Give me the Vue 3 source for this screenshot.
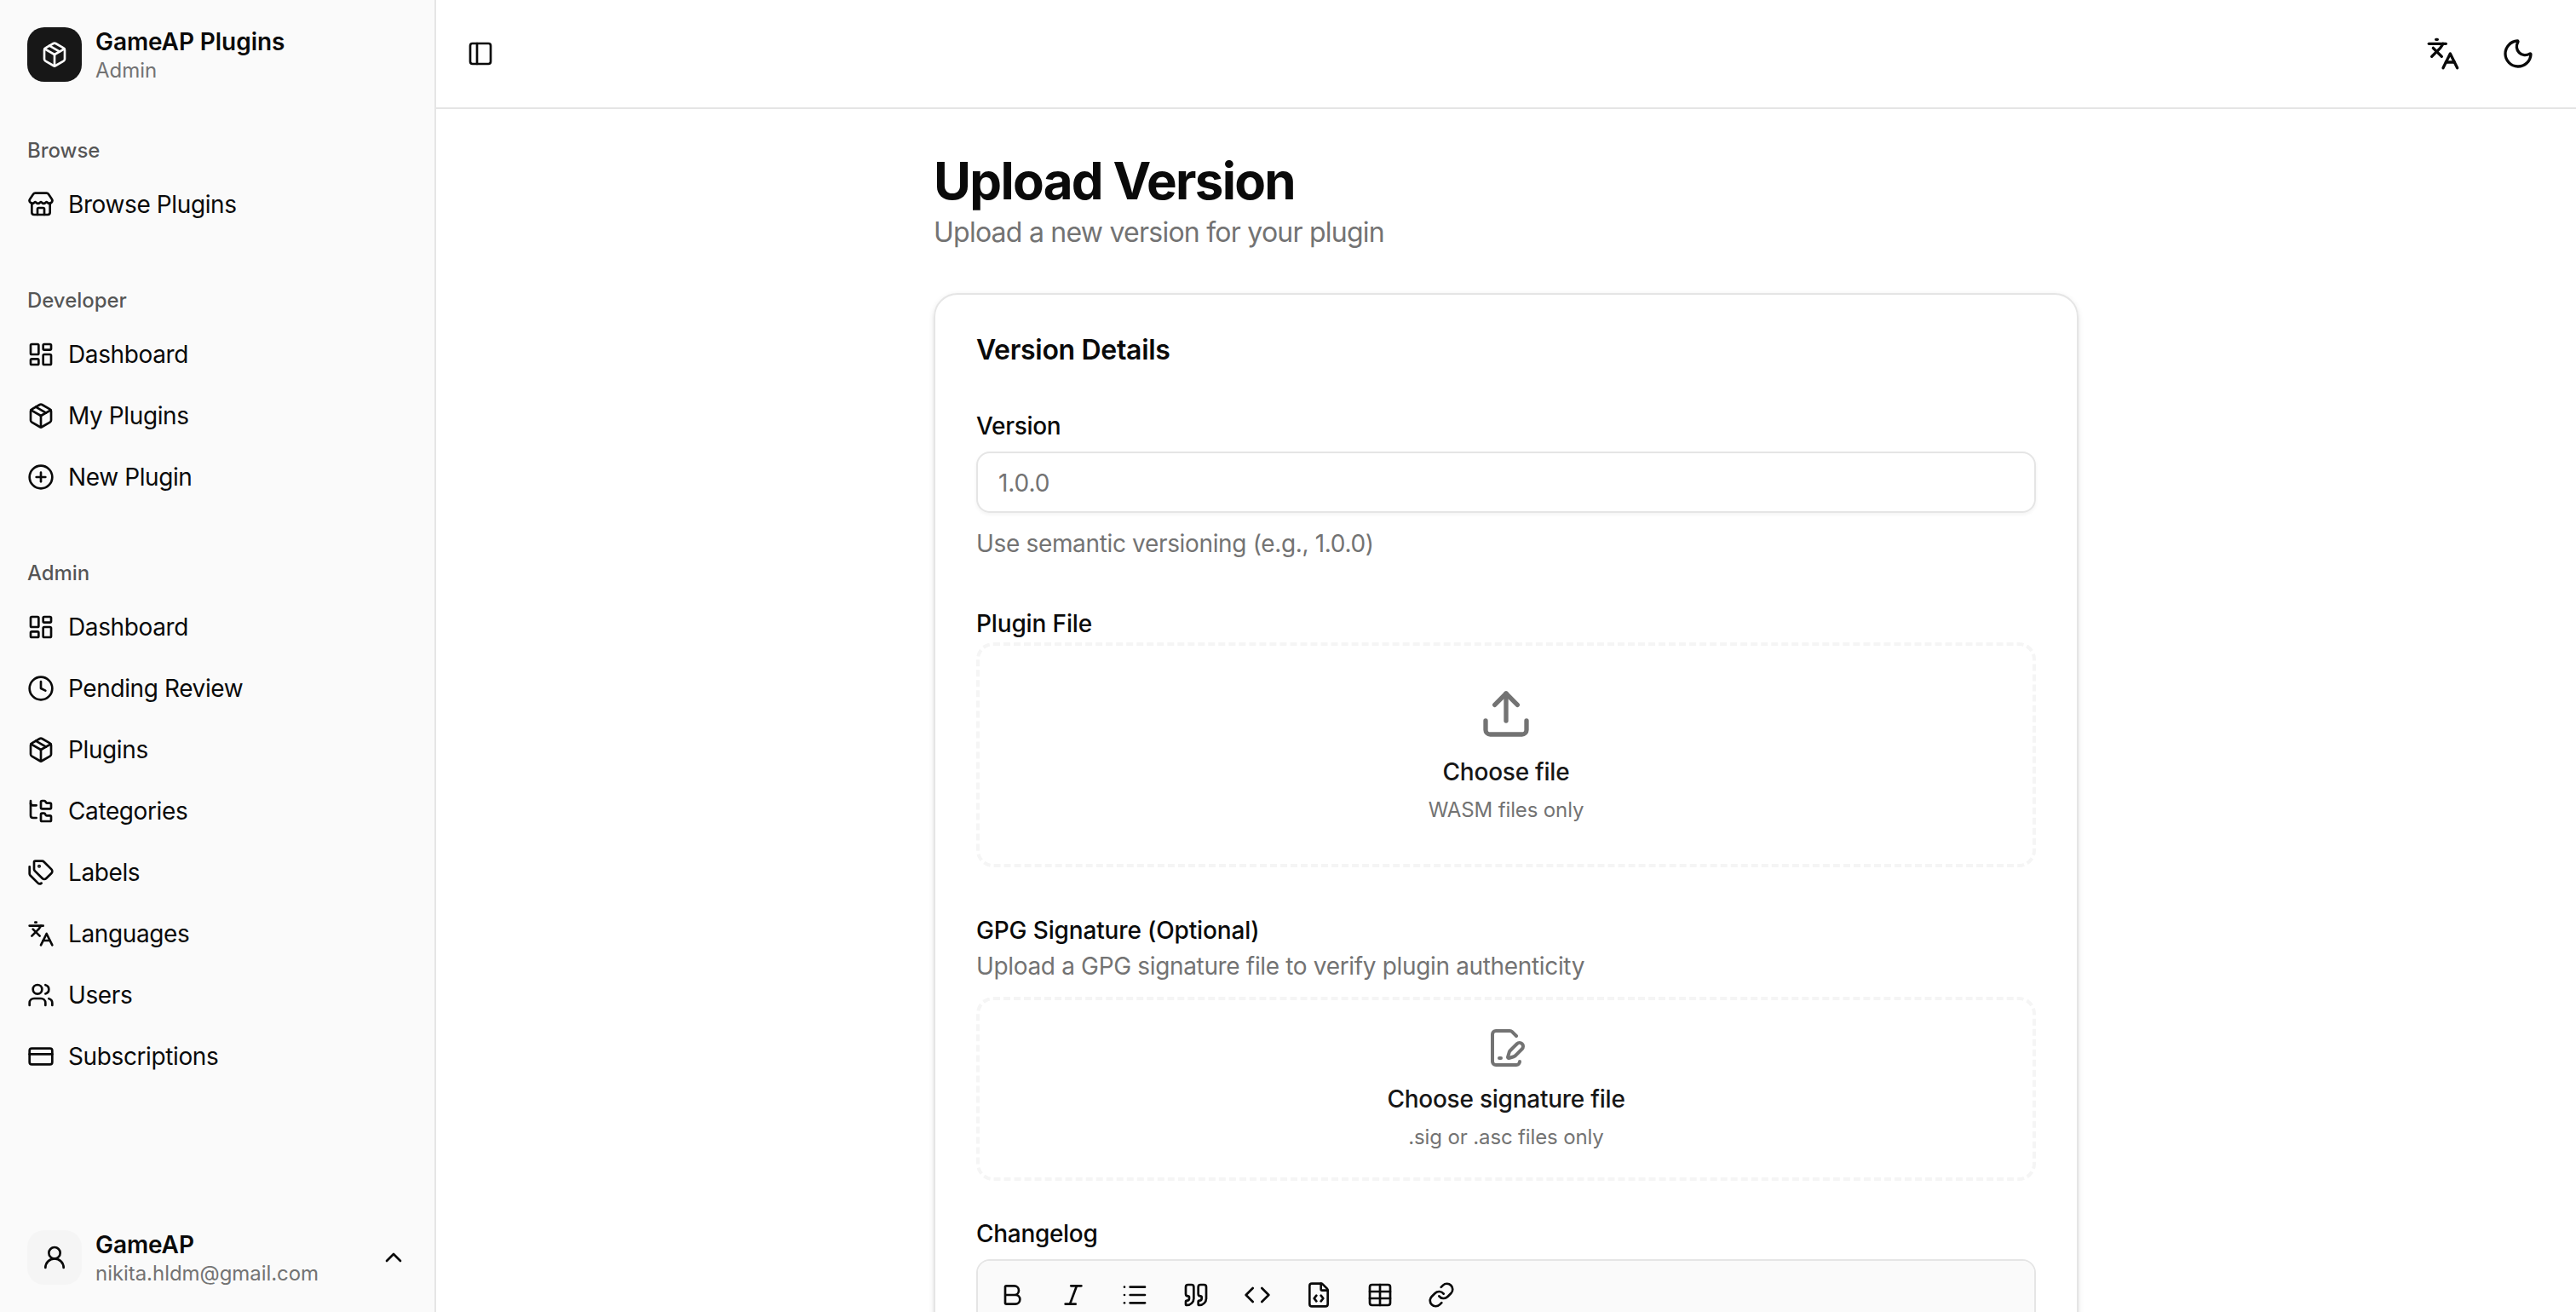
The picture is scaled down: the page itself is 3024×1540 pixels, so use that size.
<template>
  <div class="layout">
    <aside class="sidebar">
      <div class="brand">
        <div class="brand-logo"><Icon name="package" /></div>
        <div class="stack">
          <span class="stack-title">GameAP Plugins</span>
          <span class="stack-sub">Admin</span>
        </div>
      </div>

      <nav class="groups">
        <section v-for="group in groups" :key="group.label" class="group">
          <div class="group-label">{{ group.label }}</div>
          <ul>
            <li v-for="item in group.items" :key="item.title">
              <a class="nav-item">
                <Icon :name="item.icon" />
                <span>{{ item.title }}</span>
              </a>
            </li>
          </ul>
        </section>
      </nav>

      <div class="account">
        <div class="avatar"><Icon name="user" /></div>
        <div class="stack">
          <span class="stack-title">GameAP</span>
          <span class="stack-sub">nikita.hldm@gmail.com</span>
        </div>
        <Icon name="chevronUp" />
      </div>
    </aside>

    <div class="content">
      <header class="topbar">
        <button class="trigger" aria-label="Toggle sidebar"><Icon name="panelLeft" /></button>
        <div class="topbar-actions">
          <button class="icon-btn" aria-label="Language"><Icon name="languages" class="icon-md" /></button>
          <button class="icon-btn" aria-label="Theme"><Icon name="moon" class="icon-md" /></button>
        </div>
      </header>

      <main class="page">
        <div class="page-head">
          <h1>Upload Version</h1>
          <p>Upload a new version for your plugin</p>
        </div>

        <form class="card" @submit.prevent>
          <h2>Version Details</h2>

          <div class="field">
            <label for="version">Version</label>
            <input id="version" v-model="version" type="text" placeholder="1.0.0" />
            <p class="hint">Use semantic versioning (e.g., 1.0.0)</p>
          </div>

          <div class="upload">
            <div class="upload-label"><label>Plugin File</label></div>
            <div class="dropzone">
              <Icon name="upload" class="icon-xl" />
              <span class="drop-title">Choose file</span>
              <span class="drop-note">WASM files only</span>
            </div>
          </div>

          <div class="upload">
            <div class="upload-label"><label>GPG Signature (Optional)</label></div>
            <p class="hint upload-hint">Upload a GPG signature file to verify plugin authenticity</p>
            <div class="dropzone compact">
              <Icon name="filePen" class="icon-lg" />
              <span class="drop-title">Choose signature file</span>
              <span class="drop-note">.sig or .asc files only</span>
            </div>
          </div>

          <div class="field">
            <label>Changelog</label>
            <div class="editor">
              <div class="toolbar">
                <button v-for="tool in tools" :key="tool" type="button" class="tool" :aria-label="tool">
                  <Icon :name="tool" />
                </button>
              </div>
              <div class="editor-body"></div>
            </div>
          </div>
        </form>
      </main>
    </div>
  </div>
</template>

<script setup>
import { h, ref } from 'vue';

const icons = {
  package:
    '<path d="M11 21.73a2 2 0 0 0 2 0l7-4A2 2 0 0 0 21 16V8a2 2 0 0 0-1-1.73l-7-4a2 2 0 0 0-2 0l-7 4A2 2 0 0 0 3 8v8a2 2 0 0 0 1 1.73z"/><path d="M12 22V12"/><path d="M3.29 7 12 12l8.71-5"/><path d="m7.5 4.27 9 5.15"/>',
  store:
    '<path d="M15 21v-5a1 1 0 0 0-1-1h-4a1 1 0 0 0-1 1v5"/><path d="M17.774 10.31a1.12 1.12 0 0 0-1.549 0 2.5 2.5 0 0 1-3.451 0 1.12 1.12 0 0 0-1.548 0 2.5 2.5 0 0 1-3.452 0 1.12 1.12 0 0 0-1.549 0 2.5 2.5 0 0 1-3.77-3.248l2.889-4.184A2 2 0 0 1 7 2h10a2 2 0 0 1 1.653.873l2.895 4.192a2.5 2.5 0 0 1-3.774 3.244"/><path d="M4 10.95V19a2 2 0 0 0 2 2h12a2 2 0 0 0 2-2v-8.05"/>',
  dashboard:
    '<rect width="7" height="9" x="3" y="3" rx="1"/><rect width="7" height="5" x="14" y="3" rx="1"/><rect width="7" height="9" x="14" y="12" rx="1"/><rect width="7" height="5" x="3" y="16" rx="1"/>',
  circlePlus: '<circle cx="12" cy="12" r="10"/><path d="M8 12h8"/><path d="M12 8v8"/>',
  clock: '<circle cx="12" cy="12" r="10"/><path d="M12 6v6l4 2"/>',
  folderTree:
    '<path d="M20 10a1 1 0 0 0 1-1V6a1 1 0 0 0-1-1h-2.5a1 1 0 0 1-.8-.4l-.9-1.2A1 1 0 0 0 15 3h-2a1 1 0 0 0-1 1v5a1 1 0 0 0 1 1Z"/><path d="M20 21a1 1 0 0 0 1-1v-3a1 1 0 0 0-1-1h-2.9a1 1 0 0 1-.88-.55l-.42-.85a1 1 0 0 0-.92-.6H13a1 1 0 0 0-1 1v5a1 1 0 0 0 1 1Z"/><path d="M3 5a2 2 0 0 0 2 2h3"/><path d="M3 3v13a2 2 0 0 0 2 2h3"/>',
  tags:
    '<path d="M13.172 2a2 2 0 0 1 1.414.586l6.71 6.71a2.4 2.4 0 0 1 0 3.408l-4.592 4.592a2.4 2.4 0 0 1-3.408 0l-6.71-6.71A2 2 0 0 1 6 9.172V3a1 1 0 0 1 1-1z"/><path d="M2 7v6.172a2 2 0 0 0 .586 1.414l6.71 6.71a2.4 2.4 0 0 0 3.191.193"/><circle cx="10.5" cy="6.5" r=".5" fill="currentColor"/>',
  languages:
    '<path d="m5 8 6 6"/><path d="m4 14 6-6 2-3"/><path d="M2 5h12"/><path d="M7 2h1"/><path d="m22 22-5-10-5 10"/><path d="M14 18h6"/>',
  users:
    '<path d="M16 21v-2a4 4 0 0 0-4-4H6a4 4 0 0 0-4 4v2"/><path d="M16 3.128a4 4 0 0 1 0 7.744"/><path d="M22 21v-2a4 4 0 0 0-3-3.87"/><circle cx="9" cy="7" r="4"/>',
  creditCard: '<rect width="20" height="14" x="2" y="5" rx="2"/><path d="M2 10h20"/>',
  user: '<circle cx="12" cy="8" r="5"/><path d="M20 21a8 8 0 0 0-16 0"/>',
  chevronUp: '<path d="m18 15-6-6-6 6"/>',
  panelLeft: '<rect width="18" height="18" x="3" y="3" rx="2"/><path d="M9 3v18"/>',
  moon:
    '<path d="M20.985 12.486a9 9 0 1 1-9.473-9.472c.405-.022.617.46.402.803a6 6 0 0 0 8.268 8.268c.344-.215.825-.004.803.401"/>',
  upload: '<path d="M12 3v12"/><path d="m17 8-5-5-5 5"/><path d="M21 15v4a2 2 0 0 1-2 2H5a2 2 0 0 1-2-2v-4"/>',
  filePen:
    '<path d="m18 5-2.414-2.414A2 2 0 0 0 14.172 2H6a2 2 0 0 0-2 2v16a2 2 0 0 0 2 2h12a2 2 0 0 0 2-2"/><path d="M21.378 12.626a1 1 0 0 0-3.004-3.004l-4.01 4.012a2 2 0 0 0-.506.854l-.837 2.87a.5.5 0 0 0 .62.62l2.87-.837a2 2 0 0 0 .854-.506z"/><path d="M8 18h1"/>',
  bold: '<path d="M6 12h9a4 4 0 0 1 0 8H7a1 1 0 0 1-1-1V5a1 1 0 0 1 1-1h7a4 4 0 0 1 0 8"/>',
  italic: '<path d="M19 4h-9"/><path d="M14 20H5"/><path d="M15 4 9 20"/>',
  list:
    '<path d="M3 5h.01"/><path d="M3 12h.01"/><path d="M3 19h.01"/><path d="M8 5h13"/><path d="M8 12h13"/><path d="M8 19h13"/>',
  quote:
    '<path d="M16 3a2 2 0 0 0-2 2v6a2 2 0 0 0 2 2 1 1 0 0 1 1 1v1a2 2 0 0 1-2 2 1 1 0 0 0-1 1v2a1 1 0 0 0 1 1 6 6 0 0 0 6-6V5a2 2 0 0 0-2-2z"/><path d="M5 3a2 2 0 0 0-2 2v6a2 2 0 0 0 2 2 1 1 0 0 1 1 1v1a2 2 0 0 1-2 2 1 1 0 0 0-1 1v2a1 1 0 0 0 1 1 6 6 0 0 0 6-6V5a2 2 0 0 0-2-2z"/>',
  code: '<path d="m16 18 6-6-6-6"/><path d="m8 6-6 6 6 6"/>',
  fileCode:
    '<path d="M6 22a2 2 0 0 1-2-2V4a2 2 0 0 1 2-2h8a2.4 2.4 0 0 1 1.704.706l3.588 3.588A2.4 2.4 0 0 1 20 8v12a2 2 0 0 1-2 2z"/><path d="M14 2v5a1 1 0 0 0 1 1h5"/><path d="M10 12.5 8 15l2 2.5"/><path d="m14 12.5 2 2.5-2 2.5"/>',
  table: '<path d="M12 3v18"/><rect width="18" height="18" x="3" y="3" rx="2"/><path d="M3 9h18"/><path d="M3 15h18"/>',
  link:
    '<path d="M10 13a5 5 0 0 0 7.54.54l3-3a5 5 0 0 0-7.07-7.07l-1.72 1.71"/><path d="M14 11a5 5 0 0 0-7.54-.54l-3 3a5 5 0 0 0 7.07 7.07l1.71-1.71"/>',
};

const Icon = (props) => h('svg', { class: 'icon', viewBox: '0 0 24 24', innerHTML: icons[props.name] });
Icon.props = ['name'];

const groups = [
  {
    label: 'Browse',
    items: [{ title: 'Browse Plugins', icon: 'store' }],
  },
  {
    label: 'Developer',
    items: [
      { title: 'Dashboard', icon: 'dashboard' },
      { title: 'My Plugins', icon: 'package' },
      { title: 'New Plugin', icon: 'circlePlus' },
    ],
  },
  {
    label: 'Admin',
    items: [
      { title: 'Dashboard', icon: 'dashboard' },
      { title: 'Pending Review', icon: 'clock' },
      { title: 'Plugins', icon: 'package' },
      { title: 'Categories', icon: 'folderTree' },
      { title: 'Labels', icon: 'tags' },
      { title: 'Languages', icon: 'languages' },
      { title: 'Users', icon: 'users' },
      { title: 'Subscriptions', icon: 'creditCard' },
    ],
  },
];

const tools = ['bold', 'italic', 'list', 'quote', 'code', 'fileCode', 'table', 'link'];

const version = ref('');
</script>

<style>
body {
  margin: 0;
  background: #fff;
}
</style>

<style scoped>
* {
  box-sizing: border-box;
}

.layout {
  display: flex;
  height: 100vh;
  overflow: hidden;
  color: #0a0a0a;
  font-family: Inter, "Liberation Sans", sans-serif;
  font-size: 32px;
  line-height: 48px;
  font-optical-sizing: none;
  -webkit-font-smoothing: antialiased;
}

h1,
h2,
p,
ul {
  margin: 0;
  padding: 0;
}

ul {
  list-style: none;
}

button {
  display: flex;
  align-items: center;
  justify-content: center;
  padding: 0;
  border: 0;
  background: none;
  color: inherit;
  cursor: pointer;
}

.icon {
  width: 32px;
  height: 32px;
  flex-shrink: 0;
  fill: none;
  stroke: currentColor;
  stroke-width: 2;
  stroke-linecap: round;
  stroke-linejoin: round;
}

.icon-md {
  width: 40px;
  height: 40px;
}

.icon-lg {
  width: 48px;
  height: 48px;
}

.icon-xl {
  width: 64px;
  height: 64px;
}

/* sidebar */
.sidebar {
  display: flex;
  flex-direction: column;
  width: 512px;
  flex-shrink: 0;
  background: #fafafa;
  border-right: 2px solid #e5e5e5;
}

.brand,
.account {
  display: flex;
  align-items: center;
  gap: 16px;
  height: 96px;
  margin: 16px;
  padding: 0 16px;
}

.brand-logo,
.avatar {
  display: flex;
  align-items: center;
  justify-content: center;
  width: 64px;
  height: 64px;
  border-radius: 20px;
}

.brand-logo {
  background: #171717;
  color: #fafafa;
}

.avatar {
  background: #f5f5f5;
}

.stack {
  display: grid;
  flex: 1;
}

.stack-title {
  font-size: 28px;
  line-height: 35px;
  font-weight: 600;
  letter-spacing: -0.07px;
}

.stack-sub {
  padding-top: 1px;
  margin-bottom: -1px;
  font-size: 24px;
  line-height: 30px;
  letter-spacing: -0.05px;
  color: #737373;
}

.groups {
  display: flex;
  flex: 1;
  flex-direction: column;
  gap: 16px;
}

.group {
  padding: 16px;
}

.group-label {
  padding: 1px 16px 0;
  margin-bottom: -1px;
  font-size: 24px;
  line-height: 64px;
  font-weight: 500;
  letter-spacing: -0.05px;
  color: rgba(10, 10, 10, 0.7);
}

.group ul {
  display: flex;
  flex-direction: column;
  gap: 8px;
}

.nav-item {
  display: flex;
  align-items: center;
  gap: 16px;
  height: 64px;
  padding: 0 16px;
  font-size: 28px;
  line-height: 40px;
  letter-spacing: -0.39px;
  cursor: pointer;
}

/* main column */
.content {
  flex: 1;
  min-width: 0;
}

.topbar {
  display: flex;
  align-items: center;
  justify-content: space-between;
  height: 128px;
  padding: 0 32px 0 24px;
  border-bottom: 2px solid #e5e5e5;
}

.trigger {
  width: 56px;
  height: 56px;
}

.topbar-actions {
  display: flex;
  gap: 16px;
}

.icon-btn {
  width: 72px;
  height: 72px;
}

.page {
  width: 1344px;
  margin: 0 auto;
  padding: 48px 0;
}

.page-head {
  margin-bottom: 47px;
}

.page-head h1 {
  font-size: 60px;
  line-height: 72px;
  font-weight: 700;
  letter-spacing: -0.028em;
}

.page-head p {
  padding-top: 1px;
  letter-spacing: -0.76px;
  color: #737373;
}

.card {
  display: flex;
  flex-direction: column;
  gap: 48px;
  padding: 48px;
  border: 2px solid #e5e5e5;
  border-radius: 28px;
  box-shadow: 0 2px 6px rgba(0, 0, 0, 0.1), 0 2px 4px -2px rgba(0, 0, 0, 0.1);
}

.card h2 {
  padding: 1px 0 11px;
  font-size: 32px;
  line-height: 32px;
  font-weight: 600;
  letter-spacing: -0.32px;
}

label {
  font-size: 28px;
  line-height: 28px;
  font-weight: 500;
  letter-spacing: -0.15px;
}

.field {
  display: grid;
  gap: 16px;
}

.field label {
  letter-spacing: -0.3px;
}

input {
  width: 100%;
  height: 72px;
  padding: 2px 24px 0;
  border: 2px solid #e5e5e5;
  border-radius: 16px;
  background: transparent;
  box-shadow: 0 2px 4px rgba(0, 0, 0, 0.05);
  color: inherit;
  font: inherit;
  font-size: 28px;
  font-optical-sizing: none;
  letter-spacing: -0.1px;
  outline: none;
}

input::placeholder {
  color: #737373;
  opacity: 1;
}

.hint {
  font-size: 28px;
  line-height: 40px;
  letter-spacing: -0.34px;
  color: #737373;
}

.upload-label {
  height: 48px;
  padding-top: 1px;
}

.upload-hint {
  margin-bottom: 16px;
}

.dropzone {
  display: flex;
  flex-direction: column;
  align-items: center;
  padding: 48px;
  border: 4px dashed #f5f5f5;
  border-radius: 20px;
  color: #737373;
  cursor: pointer;
}

.dropzone.compact {
  padding: 32px;
}

.drop-title {
  margin-top: 16px;
  font-size: 28px;
  line-height: 40px;
  font-weight: 500;
  letter-spacing: -0.24px;
  color: #171717;
}

.drop-note {
  margin: 8px 0 -1px;
  padding-top: 1px;
  font-size: 24px;
  line-height: 32px;
  letter-spacing: -0.13px;
}

.editor {
  overflow: hidden;
  border: 2px solid #e5e5e5;
  border-radius: 16px;
}

.toolbar {
  display: flex;
  gap: 8px;
  padding: 8px;
  background: #fafafa;
  border-bottom: 2px solid #e5e5e5;
}

.tool {
  width: 64px;
  height: 64px;
}

.editor-body {
  height: 400px;
}
</style>
